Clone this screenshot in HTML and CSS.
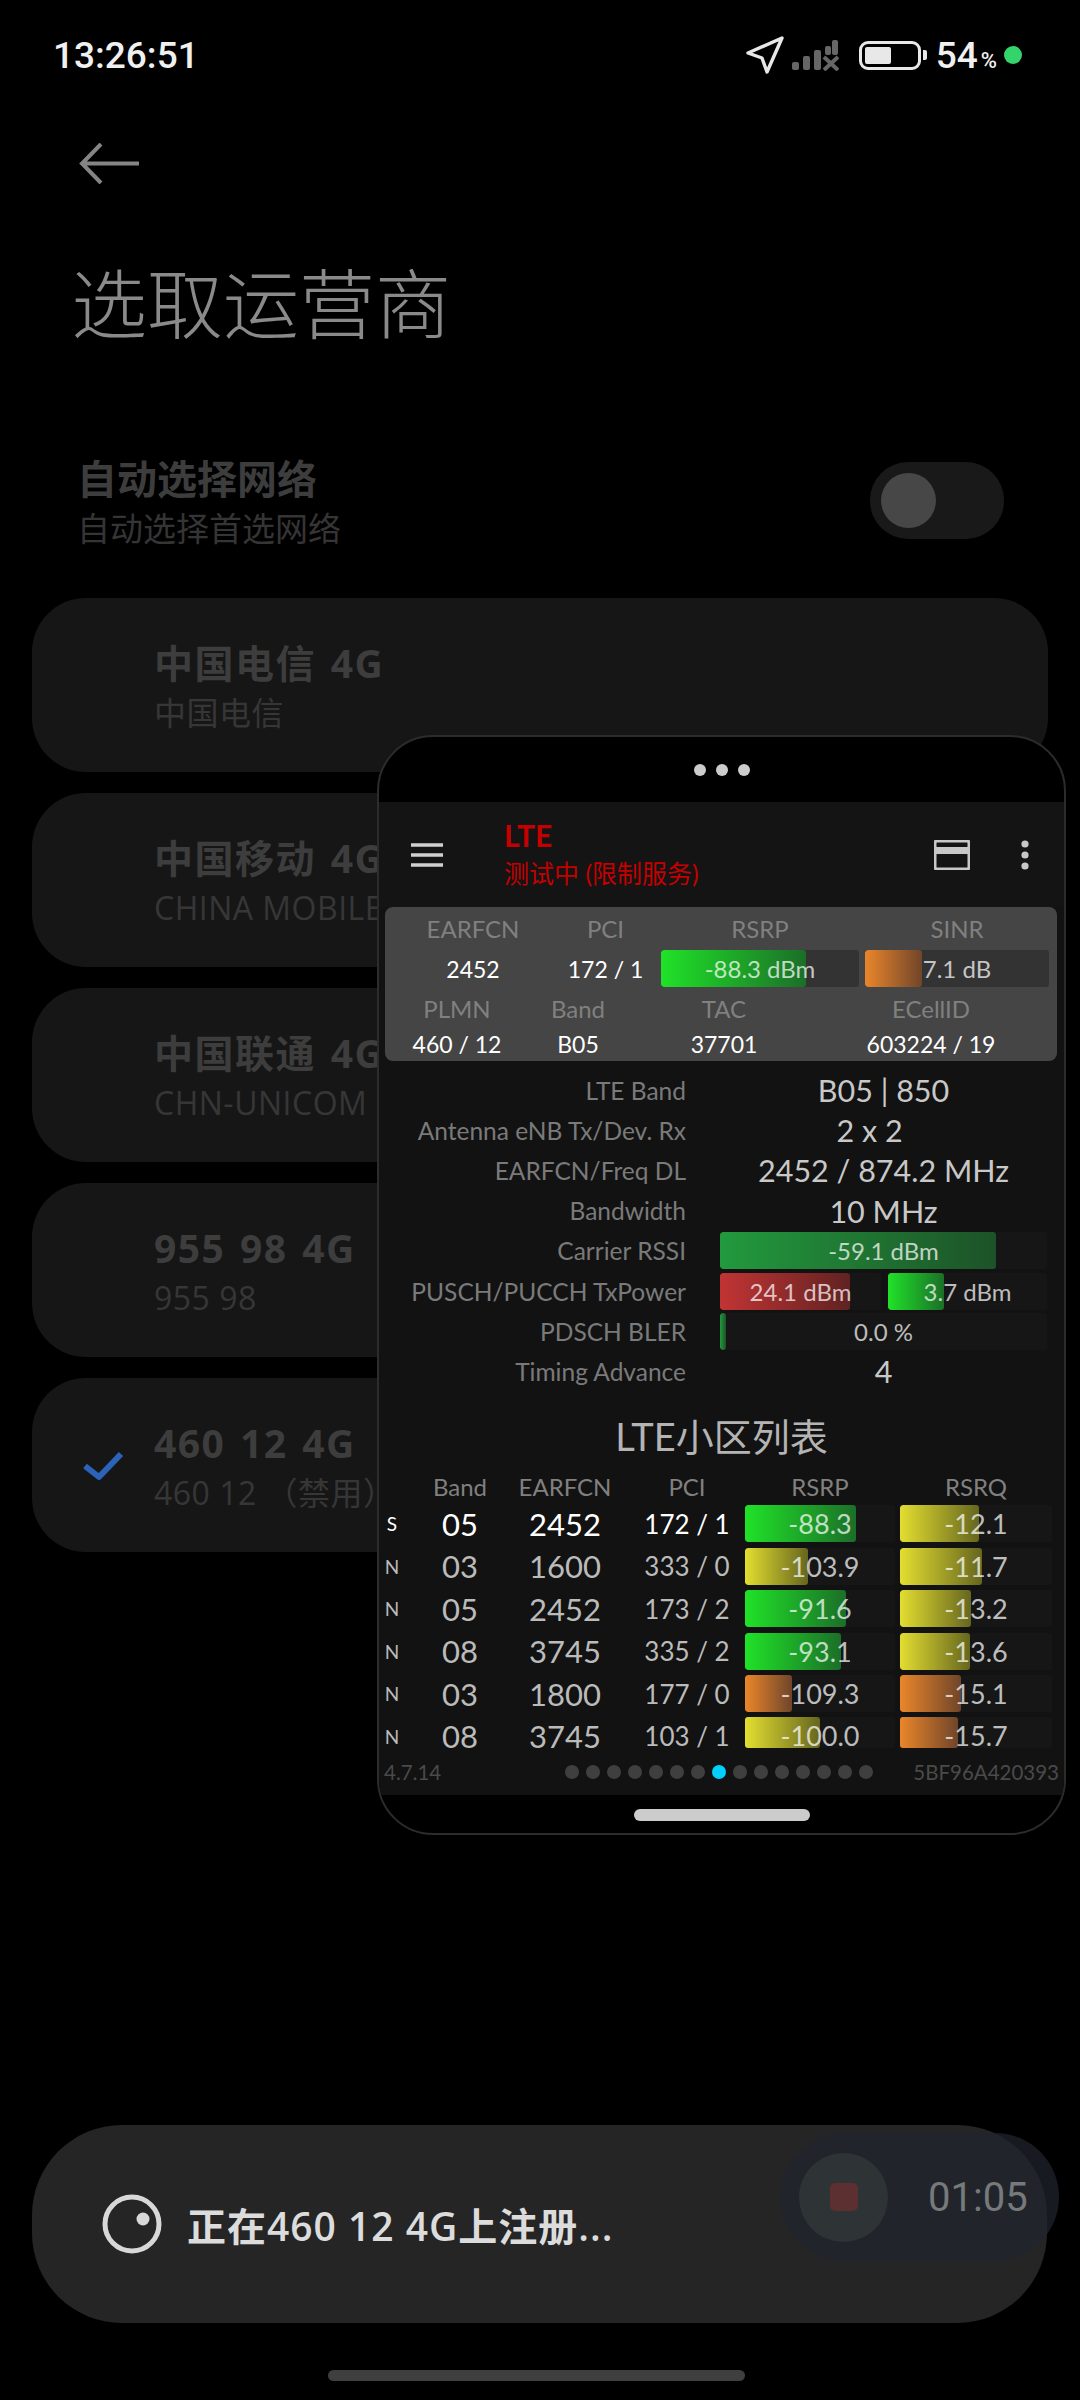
FILE: index.html
```html
<!DOCTYPE html>
<html lang="zh-CN">
<head>
  <meta charset="UTF-8">
  <meta name="viewport" content="width=device-width, initial-scale=1.0">
  <title>选取运营商</title>
  <link rel="stylesheet" href="styles.css">
</head>
<body>

  <div class="status">
    <span class="clock">13:26:51</span>
    <div class="status-right">
      <svg class="ic-loc" width="38" height="38" viewBox="0 0 38 38"><path d="M36 2 2 17l14 5 5 14z" fill="none" stroke="#e8e8e8" stroke-width="3.4" stroke-linejoin="round"/></svg>
      <svg class="ic-signal" width="48" height="32" viewBox="0 0 48 32"><g fill="#666"><rect x="1" y="23" width="7" height="8" rx="2"/><rect x="12" y="17" width="7" height="14" rx="2"/><rect x="23" y="11" width="7" height="20" rx="2"/><rect x="34" y="7" width="6" height="9" rx="2"/><rect x="41" y="1" width="6" height="15" rx="2"/></g><path d="M33 18l14 13M47 18 33 31" stroke="#666" stroke-width="4"/></svg>
      <div class="battery"><div class="battery-fill"></div></div>
      <div class="battery-tip"></div>
      <span class="pct">54<small>%</small></span>
      <span class="green-dot"></span>
    </div>
  </div>

  <svg class="back" width="62" height="41" viewBox="0 0 62 41"><path d="M60 20.500H4M22 1 3 20.500l19 19.500" fill="none" stroke="#858585" stroke-width="4"/></svg>

  <h1 class="page-title">选取运营商</h1>

  <div class="auto-row">
    <div>
      <div class="auto-title">自动选择网络</div>
      <div class="auto-sub">自动选择首选网络</div>
    </div>
    <div class="toggle"><div class="knob"></div></div>
  </div>

  <div class="cards">
    <div class="card"><div class="check"></div><div><div class="card-title">中国电信 4G</div><div class="card-sub">中国电信</div></div></div>
    <div class="card"><div class="check"></div><div><div class="card-title">中国移动 4G</div><div class="card-sub">CHINA MOBILE</div></div></div>
    <div class="card"><div class="check"></div><div><div class="card-title">中国联通 4G</div><div class="card-sub">CHN-UNICOM</div></div></div>
    <div class="card"><div class="check"></div><div><div class="card-title">955 98 4G</div><div class="card-sub">955 98</div></div></div>
    <div class="card">
      <div class="check"><svg width="42" height="36" viewBox="0 0 42 36"><path d="M3 18l14 11L39 6" fill="none" stroke="#2c62b8" stroke-width="6" stroke-linejoin="round"/></svg></div>
      <div><div class="card-title">460 12 4G</div><div class="card-sub">460 12 （禁用）</div></div>
    </div>
  </div>

  <!-- floating window -->
  <div class="popup">
    <div class="popup-top"><i></i><i></i><i></i></div>

    <div class="toolbar">
      <svg class="menu" width="32" height="24" viewBox="0 0 32 24"><path d="M0 2h32M0 12h32M0 22h32" stroke="#d0d0d0" stroke-width="3.6"/></svg>
      <div class="tb-text">
        <div class="tb-title">LTE</div>
        <div class="tb-sub">测试中 (限制服务)</div>
      </div>
      <svg class="sim" width="36" height="30" viewBox="0 0 36 30"><path d="M3 1h30a2 2 0 0 1 2 2v24a2 2 0 0 1-2 2H3a2 2 0 0 1-2-2V3a2 2 0 0 1 2-2z" fill="none" stroke="#c8c8c8" stroke-width="3"/><rect x="1" y="7" width="34" height="7" fill="#c8c8c8"/></svg>
      <svg class="more" width="10" height="30" viewBox="0 0 10 30"><circle cx="5" cy="4" r="3.600" fill="#c8c8c8"/><circle cx="5" cy="15" r="3.600" fill="#c8c8c8"/><circle cx="5" cy="26" r="3.600" fill="#c8c8c8"/></svg>
    </div>

    <div class="summary">
      <div class="sum-row sum-a sum-head">
        <span>EARFCN</span><span class="sum-pci">PCI</span><span class="sum-pad">RSRP</span><span class="sum-pad">SINR</span>
      </div>
      <div class="sum-row sum-a sum-vals">
        <span>2452</span><span class="sum-pci">172 / 1</span>
        <div class="sum-pad"><div class="bar bar-dark"><div class="fill green" style="width:73%"></div><span>-88.3 dBm</span></div></div>
        <div class="sum-pad"><div class="bar bar-dark"><div class="fill orange" style="width:31%"></div><span>7.1 dB</span></div></div>
      </div>
      <div class="sum-row sum-b sum-head2">
        <span>PLMN</span><span>Band</span><span>TAC</span><span>ECellID</span>
      </div>
      <div class="sum-row sum-b sum-vals2">
        <span>460 / 12</span><span>B05</span><span>37701</span><span>603224 / 19</span>
      </div>
    </div>

    <div class="info">
      <div class="lbl">LTE Band</div><div class="val">B05 | 850</div>
      <div class="lbl">Antenna eNB Tx/Dev. Rx</div><div class="val val-off">2 x 2</div>
      <div class="lbl">EARFCN/Freq DL</div><div class="val">2452 / 874.2 MHz</div>
      <div class="lbl">Bandwidth</div><div class="val">10 MHz</div>
      <div class="lbl">Carrier RSSI</div>
      <div class="bar"><div class="fill carrier" style="width:84.4%"></div><span>-59.1 dBm</span></div>
      <div class="lbl">PUSCH/PUCCH TxPower</div>
      <div class="bar-pair">
        <div class="bar"><div class="fill red" style="width:81%"></div><span>24.1 dBm</span></div>
        <div class="bar"><div class="fill green" style="width:35%"></div><span>3.7 dBm</span></div>
      </div>
      <div class="lbl">PDSCH BLER</div>
      <div class="bar"><div class="fill carrier" style="width:6px"></div><span>0.0 %</span></div>
      <div class="lbl">Timing Advance</div><div class="val">4</div>
    </div>

    <div class="cell-title">LTE小区列表</div>

    <div class="cell-row cell-head">
      <span></span><span>Band</span><span>EARFCN</span><span class="pci-cell">PCI</span><span>RSRP</span><span>RSRQ</span>
    </div>
    <div class="cell-list">
      <div class="cell-row first">
        <span class="kind">S</span><span class="big">05</span><span class="big">2452</span><span class="pci pci-cell">172 / 1</span>
        <div class="bar"><div class="fill green" style="width:74%"></div><span>-88.3</span></div>
        <div class="bar"><div class="fill yellow" style="width:52%"></div><span>-12.1</span></div>
      </div>
      <div class="cell-row">
        <span class="kind">N</span><span class="big">03</span><span class="big">1600</span><span class="pci pci-cell">333 / 0</span>
        <div class="bar"><div class="fill yellow" style="width:42%"></div><span>-103.9</span></div>
        <div class="bar"><div class="fill yellow" style="width:54%"></div><span>-11.7</span></div>
      </div>
      <div class="cell-row">
        <span class="kind">N</span><span class="big">05</span><span class="big">2452</span><span class="pci pci-cell">173 / 2</span>
        <div class="bar"><div class="fill green" style="width:67%"></div><span>-91.6</span></div>
        <div class="bar"><div class="fill yellow" style="width:47%"></div><span>-13.2</span></div>
      </div>
      <div class="cell-row">
        <span class="kind">N</span><span class="big">08</span><span class="big">3745</span><span class="pci pci-cell">335 / 2</span>
        <div class="bar"><div class="fill green" style="width:64%"></div><span>-93.1</span></div>
        <div class="bar"><div class="fill yellow" style="width:46%"></div><span>-13.6</span></div>
      </div>
      <div class="cell-row">
        <span class="kind">N</span><span class="big">03</span><span class="big">1800</span><span class="pci pci-cell">177 / 0</span>
        <div class="bar"><div class="fill orange" style="width:31%"></div><span>-109.3</span></div>
        <div class="bar"><div class="fill orange" style="width:40%"></div><span>-15.1</span></div>
      </div>
      <div class="cell-row cut">
        <span class="kind">N</span><span class="big">08</span><span class="big">3745</span><span class="pci pci-cell">103 / 1</span>
        <div class="bar"><div class="fill yellow" style="width:50%"></div><span>-100.0</span></div>
        <div class="bar"><div class="fill orange" style="width:38%"></div><span>-15.7</span></div>
      </div>
    </div>

    <div class="pop-foot">
      <span class="ver">4.7.14</span>
      <div class="pager">
        <i></i><i></i><i></i><i></i><i></i><i></i><i></i><i class="on"></i><i></i><i></i><i></i><i></i><i></i><i></i><i></i>
      </div>
      <span class="ver ver-right">5BF96A420393</span>
    </div>

    <div class="pop-nav"><div class="pop-pill"></div></div>
  </div>

  <!-- toast + screen recorder -->
  <div class="toast">
    <svg width="60" height="60" viewBox="0 0 60 60"><circle cx="30" cy="30" r="27" fill="none" stroke="#d8d8d8" stroke-width="5"/><circle cx="41" cy="25" r="6.500" fill="#d8d8d8"/></svg>
    <span>正在460 12 4G上注册...</span>
  </div>

  <div class="recorder">
    <div class="rec-btn"><div class="rec-stop"></div></div>
    <span class="rec-time">01:05</span>
  </div>

  <div class="home-bar"></div>

</body>
</html>
```

FILE: styles.css
```css
* {
  box-sizing: border-box;
}
html, body {
  margin: 0;
  background: #000;
}
body {
  width: 1080px;
  height: 2400px;
  position: relative;
  overflow: hidden;
  font-family: "Noto Sans", "Noto Sans CJK SC", sans-serif;
}

/* status bar */
.status {
  height: 106px;
  padding: 4px 58px 0 53px;
  display: flex;
  align-items: center;
  justify-content: space-between;
  color: #f0f0f0;
}
.clock {
  font-family: Roboto, sans-serif;
  font-size: 37px;
  font-weight: 500;
}
.status-right {
  display: flex;
  align-items: center;
}
.ic-signal {
  margin: 0 20px 0 7px;
}
.battery {
  width: 62px;
  height: 29px;
  border: 3px solid #e8e8e8;
  border-radius: 9px;
  padding: 3px;
}
.battery-fill {
  width: 26px;
  height: 100%;
  background: #e8e8e8;
  border-radius: 2px;
}
.battery-tip {
  width: 4px;
  height: 10px;
  margin-left: 2px;
  background: #e8e8e8;
  border-radius: 0 2px 2px 0;
}
.pct {
  margin-left: 9px;
  font-family: Roboto, sans-serif;
  font-size: 37px;
  font-weight: 500;
}
.pct small {
  font-size: 22px;
  margin-left: 3px;
}
.green-dot {
  width: 18px;
  height: 18px;
  margin-left: 7px;
  border-radius: 50%;
  background: #35d46a;
}

/* page */
.back {
  display: block;
  margin: 37px 0 0 79px;
}
.page-title {
  margin: 75px 0 0 71px;
  font-size: 76px;
  line-height: 90px;
  font-weight: 300;
  color: #8a8a8a;
}
.auto-row {
  height: 93px;
  margin-top: 108px;
  padding: 0 76px 0 77px;
  display: flex;
  align-items: flex-start;
  justify-content: space-between;
}
.auto-title {
  font-size: 40px;
  line-height: 44px;
  font-weight: 700;
  color: #3d3d3d;
}
.auto-sub {
  margin-top: 7px;
  font-size: 33px;
  line-height: 42px;
  color: #353535;
}
.toggle {
  width: 134px;
  height: 77px;
  margin-top: 5px;
  padding: 11px;
  background: #191919;
  border-radius: 38px;
}
.knob {
  width: 55px;
  height: 55px;
  border-radius: 50%;
  background: #474747;
}
.cards {
  margin-top: 48px;
  padding: 0 32px;
  display: flex;
  flex-direction: column;
  gap: 21px;
}
.card {
  height: 174px;
  padding-top: 42px;
  display: flex;
  background: #161616;
  border-radius: 54px;
  white-space: nowrap;
}
.check {
  width: 122px;
  padding: 28px 0 0 50px;
}
.card-title {
  font-family: "Open Sans", "Noto Sans CJK SC", sans-serif;
  font-size: 39px;
  line-height: 46px;
  font-weight: 700;
  letter-spacing: 1.5px;
  word-spacing: 3px;
  color: #3d3d3d;
}
.card-sub {
  font-family: "Open Sans", "Noto Sans CJK SC", sans-serif;
  margin-top: 6px;
  font-size: 32px;
  line-height: 42px;
  letter-spacing: 0.5px;
  color: #363636;
}

/* floating window */
.popup {
  position: absolute;
  left: 377px;
  top: 735px;
  width: 689px;
  height: 1100px;
  display: flex;
  flex-direction: column;
  background: #000;
  border: 2px solid #2c2c2c;
  border-radius: 56px;
  overflow: hidden;
  font-family: Lato, "Noto Sans CJK SC", sans-serif;
}
.popup-top {
  height: 65px;
  flex: none;
  display: flex;
  align-items: center;
  justify-content: center;
  gap: 10px;
}
.popup-top i {
  width: 12px;
  height: 12px;
  border-radius: 50%;
  background: #ccc;
}
.toolbar {
  height: 105px;
  flex: none;
  display: flex;
  align-items: center;
  background: #141414;
}
.menu {
  margin-left: 32px;
}
.tb-text {
  margin-left: 61px;
  flex: 1;
  color: #c40000;
}
.tb-title {
  font-size: 30px;
  line-height: 32px;
  margin-bottom: 4px;
  font-weight: 700;
}
.tb-sub {
  font-size: 25px;
  line-height: 36px;
}
.sim {
  margin-right: 50px;
}
.more {
  margin-right: 34px;
}
.summary {
  background: #121212;
  flex: none;
  height: 154px;
  padding: 0 6px;
  position: relative;
}
.summary::before {
  content: "";
  position: absolute;
  left: 6px;
  right: 7px;
  top: 0;
  bottom: 0;
  background: #454545;
  border-radius: 8px;
}
.sum-row {
  position: relative;
  display: grid;
  align-items: center;
  text-align: center;
  white-space: nowrap;
}
.sum-a {
  grid-template-columns: 176px 100px 204px 190px;
}
.sum-b {
  grid-template-columns: 144px 98px 194px 220px;
}
.sum-pci {
  padding-right: 11px;
}
.sum-pad {
  padding-right: 6px;
}
.sum-head, .sum-head2 {
  font-size: 24px;
  color: #808080;
}
.sum-head {
  height: 43px;
}
.sum-head2 {
  height: 42px;
}
.sum-vals {
  height: 37px;
  font-size: 23px;
  color: #fff;
}
.sum-vals2 {
  height: 29px;
  font-size: 23px;
  color: #fff;
}

/* bars */
.bar {
  position: relative;
  height: 37px;
  background: #161616;
  border-radius: 3px;
  overflow: hidden;
  text-align: center;
  font-size: 24px;
  line-height: 37px;
  white-space: nowrap;
}
.bar-dark {
  background: #333;
}
.bar span {
  position: relative;
  color: rgba(255, 255, 255, 0.72);
}
.fill {
  position: absolute;
  left: 0;
  top: 0;
  bottom: 0;
  border-radius: 3px;
}
.green {
  background: linear-gradient(90deg, #20e228, #1b6f28);
}
.carrier {
  background: linear-gradient(90deg, #229a3e, #1d5228);
}
.red {
  background: linear-gradient(90deg, #c23434, #612222);
}
.orange {
  background: linear-gradient(90deg, #ea862a, #70452a);
}
.yellow {
  background: linear-gradient(90deg, #e3de30, #66661f);
}

/* info */
.info, .cell-title, .cell-head, .cell-list, .pop-foot {
  background: #121212;
}
.info {
  flex: none;
  padding: 9px 17px 21px 0;
  display: grid;
  grid-template-columns: 307px 327px;
  column-gap: 34px;
  grid-auto-rows: 40.2px;
  align-items: center;
}
.lbl {
  text-align: right;
  font-size: 24.5px;
  color: #7a7a7a;
  white-space: nowrap;
}
.val {
  text-align: center;
  font-size: 30.5px;
  color: #c8c8c8;
  white-space: nowrap;
}
.val-off {
  padding-right: 28px;
}
.bar-pair {
  display: grid;
  grid-template-columns: 161px 159px;
  column-gap: 7px;
}
.cell-title {
  flex: none;
  height: 50px;
  text-align: center;
  font-size: 38px;
  line-height: 46px;
  color: #b4b4b4;
}

/* cell table */
.cell-row {
  display: grid;
  grid-template-columns: 26px 100px 100px 120px 150px 152px;
  column-gap: 5px;
  height: 37px;
  align-items: center;
  text-align: center;
  white-space: nowrap;
}
.pci-cell {
  padding-left: 14px;
}
.cell-head {
  flex: none;
  height: 42px;
  padding-top: 6px;
  font-size: 24px;
  color: #808080;
}
.cell-list {
  flex: none;
  height: 244px;
  display: flex;
  flex-direction: column;
  gap: 5.6px;
}
.cell-list .cell-row {
  flex: none;
  color: #bbb;
}
.cell-list .first {
  color: #fff;
}
.cell-list .cut .bar {
  height: 31px;
  align-self: start;
  overflow: visible;
}
.kind {
  font-size: 19px;
}
.big {
  font-size: 31px;
}
.pci {
  font-size: 26px;
}
.cell-list .bar {
  font-size: 27px;
}
.pop-foot {
  flex: none;
  height: 46px;
  padding: 0 5px;
  display: flex;
  align-items: center;
}
.ver {
  flex: 1;
  font-size: 20.5px;
  color: #4a4a4a;
}
.ver-right {
  text-align: right;
}
.pager {
  display: flex;
  gap: 7px;
  margin-right: 6px;
}
.pager i {
  width: 14px;
  height: 14px;
  border-radius: 50%;
  background: #3f3f3f;
}
.pager .on {
  background: #00cfff;
}
.pop-nav {
  flex: 1;
  display: flex;
  justify-content: center;
  padding-top: 14px;
}
.pop-pill {
  width: 176px;
  height: 12px;
  border-radius: 6px;
  background: #ccc;
}

/* toast */
.toast {
  position: absolute;
  left: 32px;
  top: 2125px;
  width: 1015px;
  height: 198px;
  padding: 0 0 0 70px;
  display: flex;
  align-items: center;
  gap: 25px;
  background: #252525;
  border-radius: 90px;
  font-family: "Open Sans", "Noto Sans CJK SC", sans-serif;
  font-size: 39px;
  font-weight: 600;
  letter-spacing: 1px;
  color: #dcdcdc;
}
.recorder {
  position: absolute;
  left: 780px;
  top: 2133px;
  width: 279px;
  height: 128px;
  padding-left: 19px;
  display: flex;
  align-items: center;
  background: rgba(32, 38, 46, 0.72);
  border-radius: 64px;
}
.rec-btn {
  width: 89px;
  height: 89px;
  border-radius: 50%;
  background: #2e3336;
  display: flex;
  align-items: center;
  justify-content: center;
}
.rec-stop {
  width: 28px;
  height: 28px;
  border-radius: 5px;
  background: #5c2f30;
}
.rec-time {
  margin-left: 40px;
  font-family: Roboto, sans-serif;
  font-size: 40px;
  color: #77797b;
}
.home-bar {
  position: absolute;
  left: 328px;
  top: 2370px;
  width: 417px;
  height: 11px;
  border-radius: 6px;
  background: #3f3f3f;
}
```
